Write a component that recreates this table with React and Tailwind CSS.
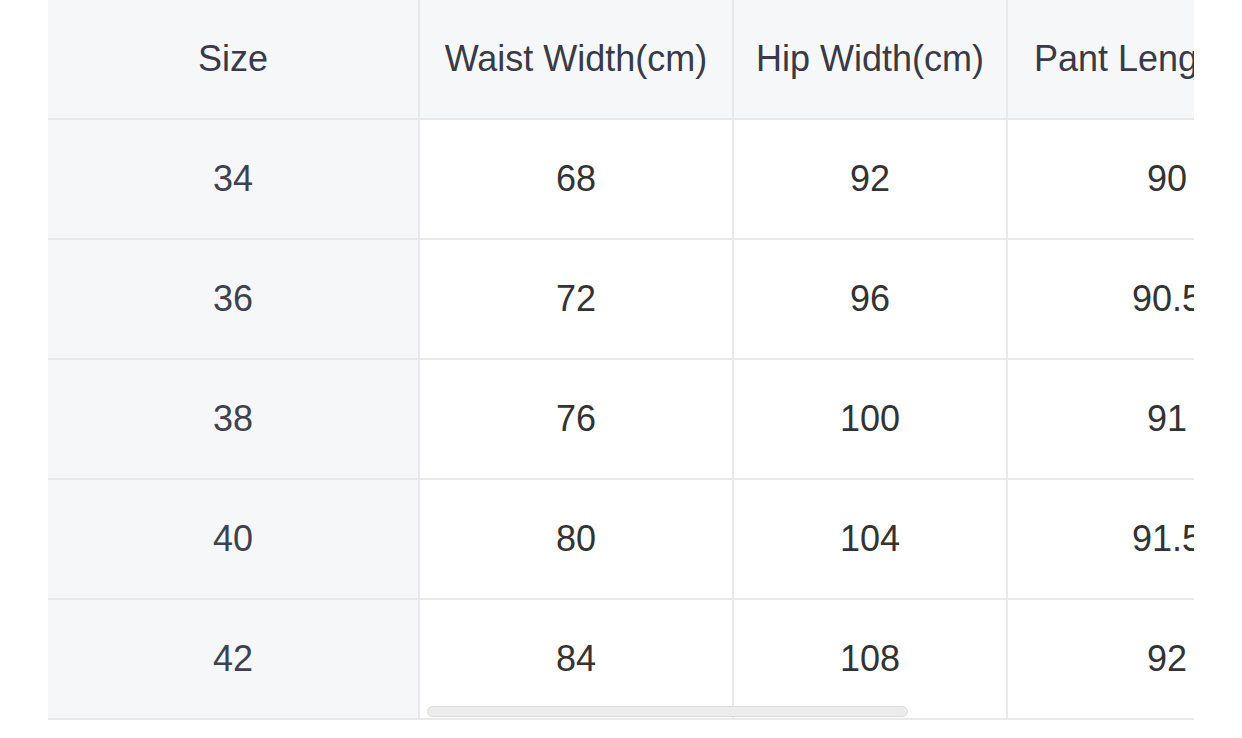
const columns = [
  { key: 'size', label: 'Size', width: 'w-[372px]' },
  { key: 'waist', label: 'Waist Width(cm)', width: 'w-[314px]' },
  { key: 'hip', label: 'Hip Width(cm)', width: 'w-[274px]' },
  { key: 'length', label: 'Pant Length(cm)', width: 'w-[318px]' },
]

const rows = [
  { size: '34', waist: '68', hip: '92', length: '90' },
  { size: '36', waist: '72', hip: '96', length: '90.5' },
  { size: '38', waist: '76', hip: '100', length: '91' },
  { size: '40', waist: '80', hip: '104', length: '91.5' },
  { size: '42', waist: '84', hip: '108', length: '92' },
]

function Cell({ col, children, header, last }) {
  const isSize = col.key === 'size'
  const bg = header || isSize ? 'bg-[#f6f7f9]' : 'bg-white'
  const color = header ? 'text-[#393a46]' : isSize ? 'text-[#40414d]' : 'text-[#333333]'
  return (
    <div
      className={`${col.width} shrink-0 h-[118px] flex items-center justify-center whitespace-nowrap ${bg} ${color} ${
        last ? '' : 'border-r-2 border-[#e9e9eb]'
      }`}
    >
      {children}
    </div>
  )
}

export default function App() {
  return (
    <div className="w-full h-[738px] bg-white pl-[48px] font-['Liberation_Sans',Arial,sans-serif] text-[36px] leading-none">
      <div className="relative w-[1146px] overflow-hidden">
        <div className="w-max">
          {/* Header */}
          <div className="flex border-b-2 border-[#e9e9eb]">
            {columns.map((col, i) => (
              <Cell key={col.key} col={col} header last={i === columns.length - 1}>
                {col.label}
              </Cell>
            ))}
          </div>

          {/* Body */}
          {rows.map((row) => (
            <div key={row.size} className="flex border-b-2 border-[#e9e9eb]">
              {columns.map((col, i) => (
                <Cell key={col.key} col={col} last={i === columns.length - 1}>
                  {row[col.key]}
                </Cell>
              ))}
            </div>
          ))}
        </div>

        {/* Scrollbar thumb */}
        <div className="absolute left-[379px] top-[706px] w-[481px] h-[11px] rounded-full bg-[#ececec] border border-[#dcdcdc]" />
      </div>
    </div>
  )
}
